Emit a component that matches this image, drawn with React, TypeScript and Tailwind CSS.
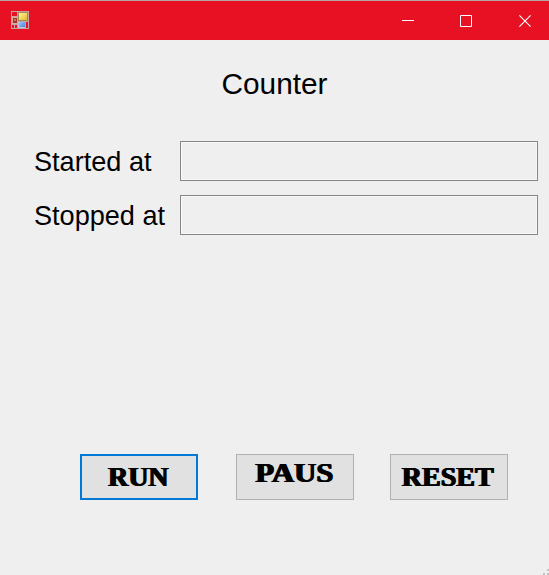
import React from "react";

function AppIcon() {
  return (
    <svg className="block h-[18px] w-[18px]" viewBox="0 0 18 18" shapeRendering="crispEdges">
      <defs>
        <linearGradient id="gold" x1="0" y1="0" x2="1" y2="1">
          <stop offset="0" stopColor="#fff3a8" />
          <stop offset="1" stopColor="#e6b820" />
        </linearGradient>
        <linearGradient id="blue" x1="0" y1="0" x2="1" y2="1">
          <stop offset="0" stopColor="#9cc8ff" />
          <stop offset="1" stopColor="#4a82d6" />
        </linearGradient>
      </defs>
      <path d="M.5.5h17v17H.5zM.5 5.5h6M6.5.5v17M6.5 10.5h11M.5 13.5h6M14.5 11v6M3.5 14v3" fill="none" stroke="#c9a5a0" />
      <rect x="1" y="6" width="5" height="7" fill="#d9aba2" />
      <rect x="2" y="7" width="4" height="5" fill="#a83028" />
      <rect x="3" y="8" width="2" height="2" fill="#d87060" />
      <rect x="7" y="1" width="10" height="9" fill="#a08a58" />
      <rect x="8" y="2" width="8" height="7" fill="url(#gold)" />
      <rect x="7" y="11" width="7" height="6" fill="#c7c5d8" />
      <rect x="8" y="11" width="6" height="5" fill="url(#blue)" />
    </svg>
  );
}

function TitleBar() {
  return (
    <header className="flex h-10 shrink-0 items-start justify-between border-t border-[#b5a5a5] bg-[#e81123]">
      <div className="pl-[11px] pt-[10px]">
        <AppIcon />
      </div>
      <div className="flex">
        <button aria-label="Minimize" className="flex h-[39px] w-[58px] items-center justify-center">
          <svg className="h-3 w-3" viewBox="0 0 12 12">
            <path d="M0 5.5h12" stroke="white" />
          </svg>
        </button>
        <button aria-label="Maximize" className="flex h-[39px] w-[58px] items-center justify-center">
          <svg className="h-3 w-3" viewBox="0 0 12 12">
            <path d="M.5.5h11v11H.5z" fill="none" stroke="white" />
          </svg>
        </button>
        <button aria-label="Close" className="flex h-[39px] w-[54px] items-center justify-center pl-[6px]">
          <svg className="h-3 w-3" viewBox="0 0 12 12">
            <path d="m.4.4 11.2 11.2M11.6.4.4 11.6" stroke="white" strokeWidth="1.1" />
          </svg>
        </button>
      </div>
    </header>
  );
}

function Field({ label }: { label: string }) {
  return (
    <label className="flex h-10 items-center">
      <span className="w-[146px] shrink-0 whitespace-nowrap pt-[2px] text-[27.1px] leading-[38px]">{label}</span>
      <input
        readOnly
        className="h-10 w-[358px] border border-[#868686] bg-[#efefef] shadow-[inset_0_0_0_1px_#f8f8f8] outline-none"
      />
    </label>
  );
}

const face =
  "block whitespace-nowrap font-['Liberation_Serif',serif] text-[28px] font-bold leading-8 [text-shadow:1px_0_black,1.5px_0_black]";

export default function App() {
  return (
    <div className="flex h-[575px] w-[549px] flex-col overflow-hidden bg-[#efefef] font-['Liberation_Sans',Arial,sans-serif] text-black">
      <TitleBar />
      <main className="flex flex-1 flex-col">
        <h1 className="mt-[26px] h-9 text-center text-[29.8px] leading-9">Counter</h1>
        <div className="mt-[39px] flex flex-col gap-[14px] pl-[34px]">
          <Field label="Started at" />
          <Field label="Stopped at" />
        </div>
        <div className="mt-[219px] flex pl-[80px]">
          <button className="flex h-[46px] w-[118px] items-start justify-center border-2 border-[#0078d7] bg-[#e1e1e1] pt-[5px] pr-[3px]">
            <span className={face}>RUN</span>
          </button>
          <button className="ml-[38px] flex h-[46px] w-[118px] items-start justify-center border border-[#b0b0b0] bg-[#e1e1e1] pt-[2px] pr-[3px]">
            <span className={`${face} scale-x-[1.1]`}>PAUS</span>
          </button>
          <button className="ml-[36px] flex h-[46px] w-[118px] items-start justify-center border border-[#b0b0b0] bg-[#e1e1e1] pt-[6px] pr-[4px]">
            <span className={face}>RESET</span>
          </button>
        </div>
        <div className="mt-auto flex justify-end">
          <svg className="block h-[6px] w-[6px]" viewBox="0 0 6 6" shapeRendering="crispEdges">
            <path d="M4 0h2v2H4zM0 4h2v2H0zM4 4h2v2H4z" fill="#c3c3c3" />
          </svg>
        </div>
      </main>
    </div>
  );
}
